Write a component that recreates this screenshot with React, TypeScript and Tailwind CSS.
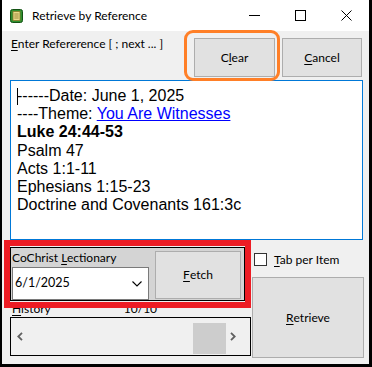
import React from "react";

const ui = { fontFamily: 'Lato, "Noto Sans", "Liberation Sans", sans-serif' };
const arial = { fontFamily: '"Liberation Sans", Arial, sans-serif' };

function U({ children }: { children: React.ReactNode }) {
  return <span className="underline underline-offset-2">{children}</span>;
}

function AppIcon() {
  return (
    <svg width="13" height="14" viewBox="0 0 13 14">
      <rect x="0.5" y="0.5" width="12" height="13" rx="2" fill="#2f8f2f" stroke="#145214" />
      <rect x="3" y="2.5" width="7" height="9" fill="#e8d98a" stroke="#8a7a2a" strokeWidth="0.8" />
      <line x1="4.3" y1="5" x2="8.7" y2="5" stroke="#8a7a2a" strokeWidth="0.8" />
      <line x1="4.3" y1="7" x2="8.7" y2="7" stroke="#8a7a2a" strokeWidth="0.8" />
      <line x1="4.3" y1="9" x2="8.7" y2="9" stroke="#8a7a2a" strokeWidth="0.8" />
    </svg>
  );
}

export default function App() {
  return (
    <div
      className="relative w-[372px] h-[367px] bg-[#f0f0f0] border-l-2 border-r-[3px] border-b-[3px] border-black flex flex-col text-black"
      style={ui}
    >
      {/* Title bar */}
      <div className="h-[31px] bg-white flex items-center shrink-0">
        <div className="ml-[8px] mt-[1px] flex">
          <AppIcon />
        </div>
        <div className="ml-[9px] text-[12px] leading-[16px]">Retrieve by Reference</div>
        <div className="ml-auto flex h-full">
          <div className="w-[46px] h-full flex items-center justify-center">
            <svg width="11" height="1" viewBox="0 0 11 1">
              <rect width="11" height="1" fill="#000" />
            </svg>
          </div>
          <div className="w-[46px] h-full flex items-center justify-center">
            <svg width="11" height="11" viewBox="0 0 11 11">
              <rect x="0.5" y="0.5" width="10" height="10" fill="none" stroke="#000" />
            </svg>
          </div>
          <div className="w-[46px] h-full flex items-center justify-center">
            <svg width="11" height="11" viewBox="0 0 11 11">
              <path d="M0.5 0.5 L10.5 10.5 M10.5 0.5 L0.5 10.5" stroke="#000" strokeWidth="1" />
            </svg>
          </div>
        </div>
      </div>

      {/* Row 1 */}
      <div className="h-[49px] flex shrink-0">
        <div className="pl-[9px] pt-[5px] text-[12px] leading-[16px]">
          <U>E</U>nter Refererence [ ; next ... ]
        </div>
        <div className="ml-auto mt-[7px] mr-[7px] flex gap-[7px]">
          <div className="w-[81px] h-[39px] bg-[#e1e1e1] border border-[#adadad] flex items-center justify-center text-[12px]">
            C<U>l</U>ear
          </div>
          <div className="w-[80px] h-[39px] bg-[#e1e1e1] border border-[#adadad] flex items-center justify-center text-[12px]">
            <U>C</U>ancel
          </div>
        </div>
      </div>

      {/* Text area */}
      <div
        className="ml-[8px] w-[353px] h-[160px] bg-white border border-[#0078d7] pl-[6px] pt-[6px] text-[16px] leading-[18.2px] shrink-0"
        style={arial}
      >
        <div className="relative">
          <span className="absolute left-0 top-[1px] w-px h-[17px] bg-black" />
          ------Date: June 1, 2025
        </div>
        <div>
          ----Theme: <span className="text-[#0000ff] underline">You Are Witnesses</span>
        </div>
        <div className="font-bold">Luke 24:44-53</div>
        <div>Psalm 47</div>
        <div>Acts 1:1-11</div>
        <div>Ephesians 1:15-23</div>
        <div>Doctrine and Covenants 161:3c</div>
      </div>

      {/* Bottom */}
      <div className="flex flex-1">
        <div className="ml-[8px] w-[241px] flex flex-col">
          <div className="mt-[7px] w-[235px] h-[54px] border border-black bg-[#d4d4d4] flex">
            <div className="flex flex-col ml-[1px]">
              <div className="h-[19px] text-[12px] leading-[16px] pt-[2px] pl-[0px]">
                CoChrist <U>L</U>ectionary
              </div>
              <div className="w-[137px] h-[33px] bg-white border border-[#7a7a7a] flex items-center pl-[2px] text-[12.5px]">
                <span>6/1/2025</span>
                <svg className="ml-auto mr-[6px]" width="10" height="6" viewBox="0 0 10 6">
                  <path d="M0.5 0.5 L5 5 L9.5 0.5" fill="none" stroke="#000" strokeWidth="1.1" />
                </svg>
              </div>
            </div>
            <div className="ml-[6px] mt-[3px] w-[86px] h-[48px] bg-[#e1e1e1] border border-[#adadad] flex items-center justify-center text-[12px]">
              <U>F</U>etch
            </div>
          </div>
          <div className="h-[16px] flex text-[12px] leading-[16px]">
            <span className="ml-[2px]">
              <U>H</U>istory
            </span>
            <span className="ml-[73px]">10/10</span>
          </div>
          <div className="w-[241px] h-[39px] border border-black flex items-center">
            <svg className="ml-[6px]" width="6" height="9" viewBox="0 0 6 9">
              <path d="M5 0.8 L1.3 4.5 L5 8.2" fill="none" stroke="#606060" strokeWidth="1.8" />
            </svg>
            <div className="ml-auto self-end mb-[1px] w-[33px] h-[31px] bg-[#cdcdcd]" />
            <svg className="ml-[4px] mr-[14px]" width="6" height="9" viewBox="0 0 6 9">
              <path d="M1 0.8 L4.7 4.5 L1 8.2" fill="none" stroke="#606060" strokeWidth="1.8" />
            </svg>
          </div>
        </div>
        <div className="ml-[1px] w-[113px] flex flex-col">
          <div className="mt-[13px] flex items-center h-[13px]">
            <div className="ml-[2px] w-[13px] h-[13px] bg-white border border-[#333]" />
            <span className="ml-[7px] text-[12px] leading-[16px]">
              <U>T</U>ab per Item
            </span>
          </div>
          <div className="mt-[11px] w-[112px] h-[81px] bg-[#e1e1e1] border border-[#adadad] flex items-center justify-center text-[12px]">
            <U>R</U>etrieve
          </div>
        </div>
      </div>

      {/* Annotations */}
      <div className="absolute left-[182px] top-[30px] w-[96px] h-[51px] border-[3px] border-[#ff7f27] rounded-[9px] pointer-events-none" />
      <div className="absolute left-[2px] top-[240px] w-[247px] h-[68px] border-[6px] border-[#ed1c24] pointer-events-none" />
    </div>
  );
}
